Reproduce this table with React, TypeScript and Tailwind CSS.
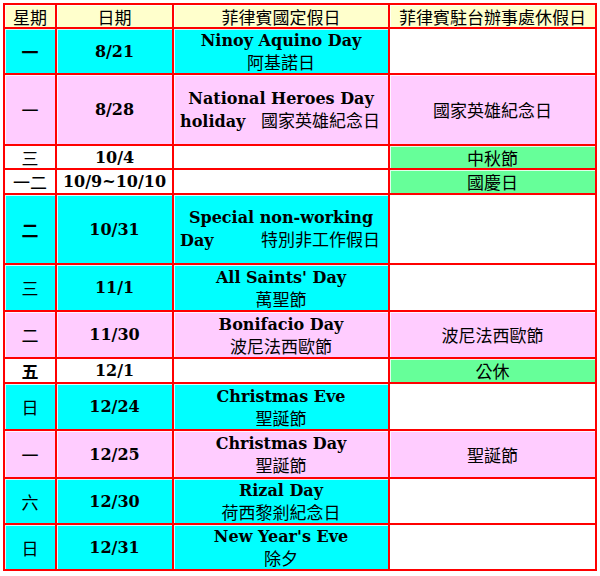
const CYAN = "bg-[#00ffff]";
const PINK = "bg-[#ffccff]";
const GREEN = "bg-[#66ff99]";
const WHITE = "bg-white";

const serif = "font-['DejaVu_Serif',serif] font-bold text-[16px] text-black";
const cjk = "font-['Noto_Sans_CJK_TC',sans-serif] text-[17px] text-black";

type Row = {
    day: string;
    dayBold?: boolean;
    date: string;
    bg: string;
    holidayBg: string;
    en?: string;
    zh?: string;
    split?: [string, string, string];
    office?: string;
    officeBg: string;
};

const rows: Row[] = [
    { day: "一", dayBold: true, date: "8/21", bg: CYAN, holidayBg: CYAN, en: "Ninoy Aquino Day", zh: "阿基諾日", officeBg: WHITE },
    { day: "一", date: "8/28", bg: PINK, holidayBg: PINK, split: ["National Heroes Day", "holiday", "國家英雄紀念日"], office: "國家英雄紀念日", officeBg: PINK },
    { day: "三", date: "10/4", bg: WHITE, holidayBg: WHITE, office: "中秋節", officeBg: GREEN },
    { day: "一二", date: "10/9~10/10", bg: WHITE, holidayBg: WHITE, office: "國慶日", officeBg: GREEN },
    { day: "二", dayBold: true, date: "10/31", bg: CYAN, holidayBg: CYAN, split: ["Special non-working", "Day", "特別非工作假日"], officeBg: WHITE },
    { day: "三", date: "11/1", bg: CYAN, holidayBg: CYAN, en: "All Saints' Day", zh: "萬聖節", officeBg: WHITE },
    { day: "二", date: "11/30", bg: PINK, holidayBg: PINK, en: "Bonifacio Day", zh: "波尼法西歐節", office: "波尼法西歐節", officeBg: PINK },
    { day: "五", dayBold: true, date: "12/1", bg: WHITE, holidayBg: WHITE, office: "公休", officeBg: GREEN },
    { day: "日", date: "12/24", bg: CYAN, holidayBg: CYAN, en: "Christmas Eve", zh: "聖誕節", officeBg: WHITE },
    { day: "一", date: "12/25", bg: PINK, holidayBg: PINK, en: "Christmas Day", zh: "聖誕節", office: "聖誕節", officeBg: PINK },
    { day: "六", date: "12/30", bg: CYAN, holidayBg: CYAN, en: "Rizal Day", zh: "荷西黎剎紀念日", officeBg: WHITE },
    { day: "日", date: "12/31", bg: CYAN, holidayBg: CYAN, en: "New Year's Eve", zh: "除夕", officeBg: WHITE },
];

const cell = "flex flex-col items-center justify-center text-center leading-[21px] shadow-[inset_1px_1px_0_rgba(255,255,255,0.8)]";

function Holiday({ row }: { row: Row }) {
    if (row.split) {
        return (
            <div className={`${cell} ${row.holidayBg} items-stretch`}>
                <div className={`${serif} text-center`}>{row.split[0]}</div>
                <div className="flex items-baseline justify-between pl-[6px] pr-[8px]">
                    <span className={serif}>{row.split[1]}</span>
                    <span className={cjk}>{row.split[2]}</span>
                </div>
            </div>
        );
    }
    return (
        <div className={`${cell} ${row.holidayBg}`}>
            {row.en && <div className={serif}>{row.en}</div>}
            {row.zh && <div className={cjk}>{row.zh}</div>}
        </div>
    );
}

export default function App() {
    return (
        <div className="w-[600px] h-[576px] bg-white pt-[3px] pl-[3px]">
            <div className="grid w-[594px] bg-[#ff0000] p-[2px] gap-[2px] grid-cols-[50px_115px_214px_205px] grid-rows-[22px_44px_69px_22px_23px_68px_45px_45px_23px_45px_46px_44px_44px]">
                {/* Header */}
                <div className={`${cell} bg-[#ffffcc] ${cjk}`}>星期</div>
                <div className={`${cell} bg-[#ffffcc] ${cjk}`}>日期</div>
                <div className={`${cell} bg-[#ffffcc] ${cjk}`}>菲律賓國定假日</div>
                <div className={`${cell} bg-[#ffffcc] ${cjk}`}>菲律賓駐台辦事處休假日</div>

                {rows.map((row, i) => (
                    <div key={i} className="contents">
                        <div className={`${cell} ${row.bg} ${cjk} ${row.dayBold ? "font-bold" : ""}`}>{row.day}</div>
                        <div className={`${cell} ${row.bg} ${serif}`}>{row.date}</div>
                        <Holiday row={row} />
                        <div className={`${cell} ${row.officeBg} ${cjk}`}>{row.office}</div>
                    </div>
                ))}
            </div>
        </div>
    );
}
